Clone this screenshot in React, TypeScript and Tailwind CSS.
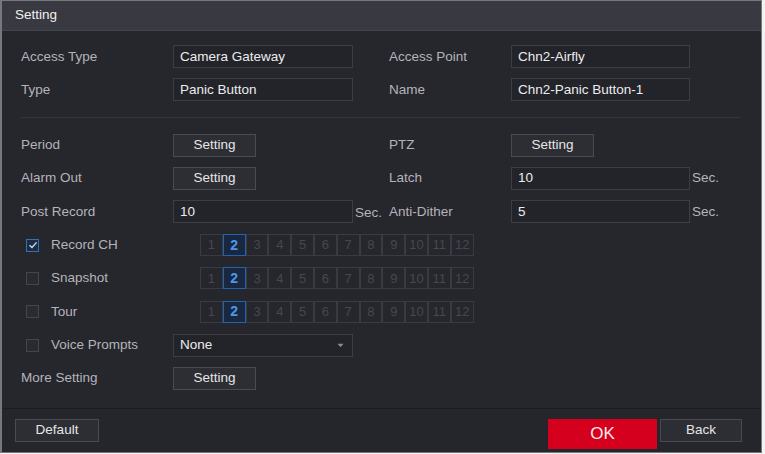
const font = { fontFamily: '"Liberation Sans", Arial, sans-serif' };

function Label({ children, className = "" }: { children: React.ReactNode; className?: string }) {
  return <div className={`text-[13.5px] text-[#b4b4ba] ${className}`}>{children}</div>;
}

function TextBox({ value, className = "w-[180px]" }: { value: string; className?: string }) {
  return (
    <div className={`h-[23px] border border-[#3d3d45] bg-[#23232a] px-[6px] flex items-center text-[13.5px] text-[#ececec] ${className}`}>
      {value}
    </div>
  );
}

function SettingButton() {
  return (
    <div className="w-[83px] h-[23px] border border-[#4a4a52] bg-[#2d2d34] flex items-center justify-center text-[13.5px] text-[#e6e6e6]">
      Setting
    </div>
  );
}

function Sec() {
  return <span className="ml-[2px] text-[13.5px] text-[#b4b4ba]">Sec.</span>;
}

function CheckBox({ checked }: { checked?: boolean }) {
  return (
    <div
      className={`w-[13px] h-[13px] border flex items-center justify-center ${
        checked ? "border-[#3470b4] bg-[#1d2c44]" : "border-[#45454d] bg-[#2a2a31]"
      }`}
    >
      {checked && (
        <svg width="10" height="10" viewBox="0 0 10 10">
          <path d="M1.5 5.2 L4 7.5 L8.6 2.4" fill="none" stroke="#c9dcf2" strokeWidth="1.4" />
        </svg>
      )}
    </div>
  );
}

function Channels() {
  const chs = Array.from({ length: 12 }, (_, i) => i + 1);
  return (
    <div className="flex ml-[27px]">
      {chs.map((n) => (
        <div
          key={n}
          className={`w-[22.8px] h-[22px] border flex items-center justify-center ${
            n === 2
              ? "border-[#2563a8] bg-[#1a2740] text-[#4a98ea] font-bold text-[14px]"
              : "border-[#3a3a42] text-[#474750] text-[13px]"
          }`}
        >
          {n}
        </div>
      ))}
    </div>
  );
}

function Row({ children }: { children: React.ReactNode }) {
  return <div className="h-[33.3px] flex items-center">{children}</div>;
}

export default function App() {
  return (
    <div className="w-[765px] h-[454px] bg-[#f2f2f2]" style={font}>
      <div className="w-[762px] h-[453px] border border-[#77777d] border-l-2 bg-[#26262d] flex flex-col">
        <div className="h-[30px] bg-[#393941] border-b border-[#45454d] flex items-center pl-[13px] text-[13.5px] text-[#f0f0f0]">
          Setting
        </div>

        <div className="flex-1 pl-[19px] pt-[9px]">
          <Row>
            <Label className="w-[152px]">Access Type</Label>
            <TextBox value="Camera Gateway" />
            <div className="w-[36px]" />
            <Label className="w-[122px]">Access Point</Label>
            <TextBox value="Chn2-Airfly" className="w-[179px]" />
          </Row>
          <Row>
            <Label className="w-[152px]">Type</Label>
            <TextBox value="Panic Button" />
            <div className="w-[36px]" />
            <Label className="w-[122px]">Name</Label>
            <TextBox value="Chn2-Panic Button-1" className="w-[179px]" />
          </Row>

          <div className="h-[22px] flex items-center pr-[20px]">
            <div className="w-full h-px bg-[#34343c]" />
          </div>

          <Row>
            <Label className="w-[152px]">Period</Label>
            <SettingButton />
            <div className="w-[133px]" />
            <Label className="w-[122px]">PTZ</Label>
            <SettingButton />
          </Row>
          <Row>
            <Label className="w-[152px]">Alarm Out</Label>
            <SettingButton />
            <div className="w-[133px]" />
            <Label className="w-[122px]">Latch</Label>
            <TextBox value="10" className="w-[179px]" />
            <Sec />
          </Row>
          <Row>
            <Label className="w-[152px]">Post Record</Label>
            <TextBox value="10" />
            <div className="w-[36px]">
              <Sec />
            </div>
            <Label className="w-[122px]">Anti-Dither</Label>
            <TextBox value="5" className="w-[179px]" />
            <Sec />
          </Row>
          <Row>
            <div className="w-[152px] flex items-center pl-[5px]">
              <CheckBox checked />
              <Label className="ml-[12px]">Record CH</Label>
            </div>
            <Channels />
          </Row>
          <Row>
            <div className="w-[152px] flex items-center pl-[5px]">
              <CheckBox />
              <Label className="ml-[12px]">Snapshot</Label>
            </div>
            <Channels />
          </Row>
          <Row>
            <div className="w-[152px] flex items-center pl-[5px]">
              <CheckBox />
              <Label className="ml-[12px]">Tour</Label>
            </div>
            <Channels />
          </Row>
          <Row>
            <div className="w-[152px] flex items-center pl-[5px]">
              <CheckBox />
              <Label className="ml-[12px]">Voice Prompts</Label>
            </div>
            <div className="w-[180px] h-[23px] border border-[#3d3d45] bg-[#23232a] px-[6px] flex items-center justify-between text-[13.5px] text-[#ececec]">
              <span>None</span>
              <svg width="7" height="5" viewBox="0 0 7 5" className="mr-[2px]">
                <path d="M0.5 0.8 L6.5 0.8 L3.5 4.2 Z" fill="#8a8a92" />
              </svg>
            </div>
          </Row>
          <Row>
            <Label className="w-[152px]">More Setting</Label>
            <SettingButton />
          </Row>
        </div>

        <div className="h-[44px] border-t border-[#1b1b21] bg-[#25252c] flex items-center pl-[13px] pr-[19px]">
          <div className="w-[84px] h-[23px] border border-[#4a4a52] bg-[#2d2d34] flex items-center justify-center text-[13.5px] text-[#e6e6e6]">
            Default
          </div>
          <div className="flex-1" />
          <div className="w-[109px] h-[30px] bg-[#d4001e] flex items-center justify-center text-[17px] text-[#ffe8ea] mt-[6px]">
            OK
          </div>
          <div className="w-[82px] h-[23px] ml-[3px] border border-[#4a4a52] bg-[#2d2d34] flex items-center justify-center text-[13.5px] text-[#e6e6e6]">
            Back
          </div>
        </div>
      </div>
    </div>
  );
}
